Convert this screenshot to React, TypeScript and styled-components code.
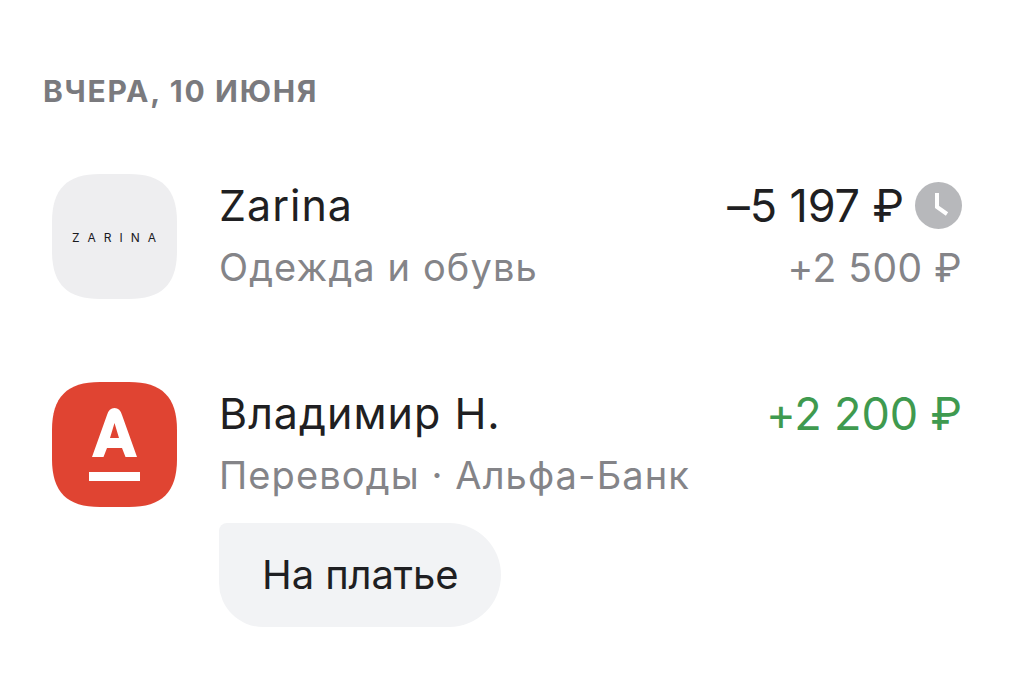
import styled, { createGlobalStyle } from "styled-components";

const GlobalStyle = createGlobalStyle`
  html, body {
    margin: 0;
    padding: 0;
    background: #fff;
    font-family: Inter, "Noto Sans", sans-serif;
  }
`;

const Page = styled.div`
  width: 1024px;
  height: 687px;
  overflow: hidden;
  padding: 71px 62px 0 43px;
  box-sizing: border-box;
  background: #fff;
`;

const DateTitle = styled.div`
  font-size: 30px;
  line-height: 40px;
  font-weight: 700;
  color: #7a7a7e;
  letter-spacing: 1.7px;
`;

const Row = styled.div`
  display: flex;
  padding-left: 9px;
  margin-top: ${(p: { $top: number }) => p.$top}px;
`;

const Logo = styled.svg`
  width: 125px;
  height: 125px;
  flex: none;
`;

const Body = styled.div`
  flex: 1;
  margin-left: 42px;
  min-width: 0;
`;

const Line = styled.div`
  display: flex;
  justify-content: space-between;
  align-items: center;
  height: 62px;
`;

const Title = styled.div`
  font-size: 43px;
  color: #1f1f22;
  letter-spacing: 1px;
`;

const Sub = styled.div`
  font-size: 38px;
  color: #848488;
  letter-spacing: 1.1px;
`;

const Amount = styled.div<{ $color?: string }>`
  display: flex;
  align-items: center;
  gap: 11px;
  font-size: 45px;
  color: ${(p) => p.$color || "#1f1f22"};
  letter-spacing: -0.1px;
`;

const SubAmount = styled.div`
  font-size: 39px;
  color: #848488;
  letter-spacing: 0.5px;
`;

const Comment = styled.div`
  display: inline-block;
  margin-top: 17px;
  padding: 0 43px;
  height: 104px;
  line-height: 104px;
  border-radius: 8px 52px 52px 44px;
  background: #f2f3f5;
  font-size: 40px;
  letter-spacing: -0.1px;
  color: #1f1f22;
`;

const SQUIRCLE =
  "M48 0H77C110 0 125 15 125 48V77C125 110 110 125 77 125H48C15 125 0 110 0 77V48C0 15 15 0 48 0Z";

const ClockIcon = () => (
  <svg width="47" height="47" viewBox="0 0 47 47">
    <circle cx="23.5" cy="23.5" r="23.5" fill="#b7b8bb" />
    <path d="M22 11v14l10 7" fill="none" stroke="#fff" strokeWidth="4" />
  </svg>
);

const App = () => {
  return (
    <Page>
      <GlobalStyle />
      <DateTitle>ВЧЕРА, 10 ИЮНЯ</DateTitle>
      <Row $top={63}>
        <Logo viewBox="0 0 125 125">
          <path d={SQUIRCLE} fill="#eeeef0" />
          <text x="20" y="67.5" fontSize="12" letterSpacing="8" fill="#1a1a1f" fontFamily="Inter, sans-serif">
            ZARINA
          </text>
        </Logo>
        <Body>
          <Line>
            <Title>Zarina</Title>
            <Amount>
              –5 197 ₽
              <ClockIcon />
            </Amount>
          </Line>
          <Line>
            <Sub>Одежда и обувь</Sub>
            <SubAmount>+2 500 ₽</SubAmount>
          </Line>
        </Body>
      </Row>
      <Row $top={83}>
        <Logo viewBox="0 0 125 125">
          <path d={SQUIRCLE} fill="#e04432" />
          <path
            d="M40 75L55 33Q57 26 62.5 26Q68 26 70 33L85 75H73.5L70 66H55L51.5 75ZM58 56H67L62.5 41Z"
            fill="#fff"
            fillRule="evenodd"
          />
          <rect x="37" y="90" width="51" height="9" fill="#fff" />
        </Logo>
        <Body>
          <Line>
            <Title>Владимир Н.</Title>
            <Amount $color="#3f9a4f">+2 200 ₽</Amount>
          </Line>
          <Line>
            <Sub>Переводы · Альфа-Банк</Sub>
          </Line>
          <Comment>На платье</Comment>
        </Body>
      </Row>
    </Page>
  );
};

export default App;
